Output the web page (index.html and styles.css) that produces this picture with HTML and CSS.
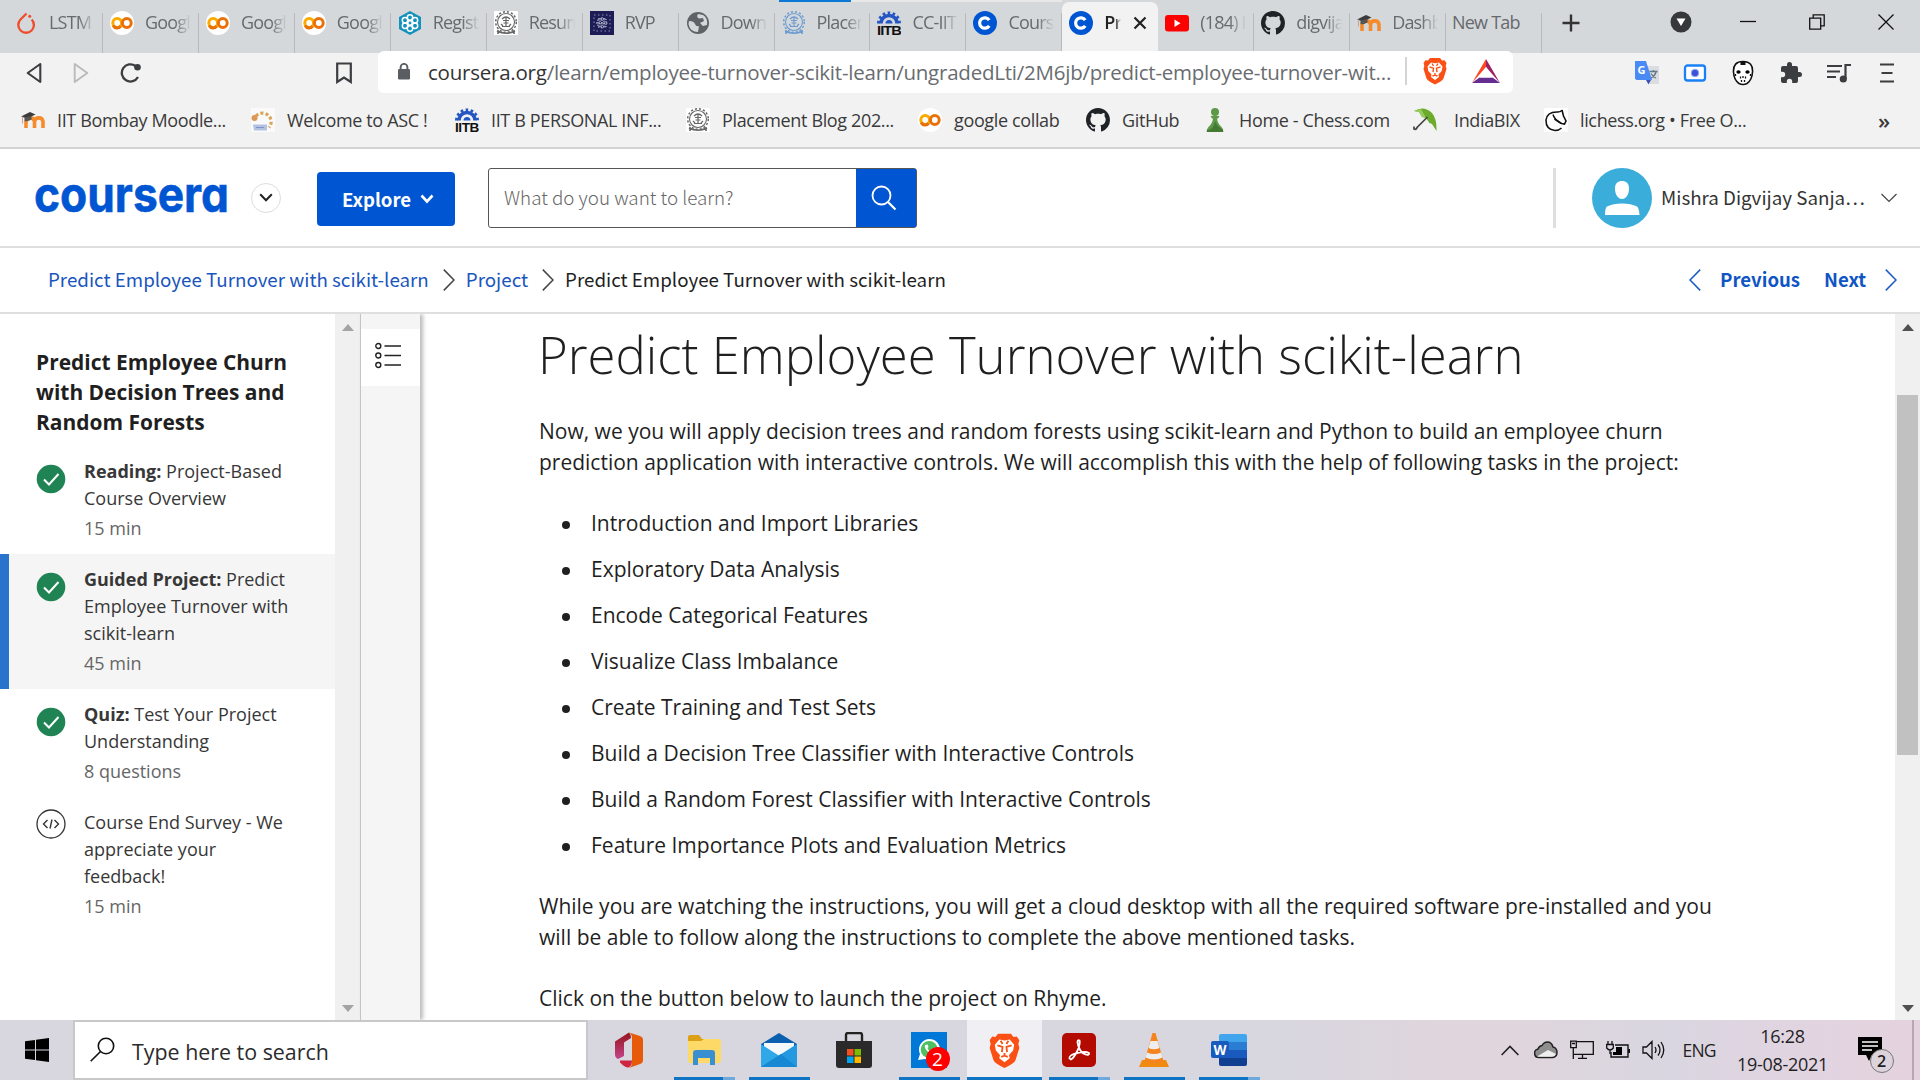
FILE: index.html
```html
<!DOCTYPE html>
<html lang="en">
<head>
<meta charset="utf-8">
<title>Predict Employee Turnover with scikit-learn | Coursera</title>
<link rel="stylesheet" href="styles.css">
</head>
<body>
<svg class="defs" width="0" height="0" aria-hidden="true">
  <symbol id="colab" viewBox="0 0 24 24"><circle cx="12" cy="12" r="12" fill="#fff"/><circle cx="7.2" cy="12" r="4.4" fill="none" stroke="#f9ab00" stroke-width="3"/><circle cx="16.8" cy="12" r="4.4" fill="none" stroke="#e8710a" stroke-width="3"/><path d="M3.2 14.5a4.4 4.4 0 0 0 7.4.8" fill="none" stroke="#e8710a" stroke-width="3"/></symbol>
  <symbol id="moodle" viewBox="0 0 24 24"><path d="M5 20V13.500a4.300 4.300 0 0 1 8.500 0V20M13.500 20v-6.500a4.300 4.300 0 0 1 8.500 0V20" fill="none" stroke="#f58b2c" stroke-width="3.600"/><path d="M0 8.500 9 4l5.500 2.500L6 10.500z" fill="#3b3b3b"/><path d="M3.500 9.500v3.500q3 1 7-1.500V8z" fill="#555"/><path d="M1.500 8.500v7" stroke="#c9a58d" stroke-width="1"/></symbol>
  <symbol id="iitb" viewBox="0 0 24 24"><path d="M4 12.500a8 8 0 0 1 16 0" fill="none" stroke="#2456c4" stroke-width="3.500"/><path d="M1.500 12.500a10.500 10.500 0 0 1 21 0" fill="none" stroke="#2456c4" stroke-width="3" stroke-dasharray="2.600 2.400"/><path d="M8.500 12.500a3.500 3.500 0 0 1 7 0" fill="#2456c4"/><text x="0" y="24" textLength="24" lengthAdjust="spacingAndGlyphs" class="iitb-text">IITB</text></symbol>
  <symbol id="seal" viewBox="0 0 24 24"><circle cx="12" cy="11" r="8.500" fill="none" stroke="currentColor" stroke-width="1.100"/><circle cx="12" cy="11" r="10.300" fill="none" stroke="currentColor" stroke-width="1.500" stroke-dasharray="2.100 2"/><path d="M8 8q4-4 8 0M9 9.500h6M9.500 12h5M12 6v10M8 15.500h8M7 13l2 2M17 13l-2 2" fill="none" stroke="currentColor" stroke-width="1.200"/><path d="M3 20q9 4.500 18 0M4 19v4M20 19v4" fill="none" stroke="currentColor" stroke-width="1.600"/></symbol>
  <symbol id="github" viewBox="0 0 16 16"><path fill="#1f2328" d="M8 0C3.580 0 0 3.580 0 8c0 3.540 2.290 6.530 5.470 7.590.4.070.55-.17.55-.38 0-.19-.01-.82-.01-1.490-2.010.37-2.530-.49-2.690-.94-.09-.23-.48-.94-.82-1.130-.28-.15-.68-.52-.01-.53.63-.01 1.080.58 1.230.82.72 1.210 1.870.87 2.330.66.07-.52.28-.87.51-1.070-1.780-.2-3.640-.89-3.640-3.950 0-.87.31-1.590.82-2.150-.08-.2-.36-1.020.08-2.120 0 0 .67-.21 2.200.82.64-.18 1.320-.27 2-.27s1.360.09 2 .27c1.530-1.040 2.200-.82 2.200-.82.44 1.100.16 1.920.08 2.120.51.56.82 1.270.82 2.150 0 3.070-1.870 3.750-3.650 3.950.29.25.54.73.54 1.480 0 1.070-.01 1.930-.01 2.200 0 .21.15.46.55.38A8.010 8.010 0 0 0 16 8c0-4.420-3.580-8-8-8z"/></symbol>
  <symbol id="course" viewBox="0 0 24 24"><circle cx="12" cy="12" r="12" fill="#0056d2"/><path d="M16.200 9.200a5.200 5.200 0 1 0 0 5.600" fill="none" stroke="#fff" stroke-width="3.200"/></symbol>
  <symbol id="brave" viewBox="0 0 24 28"><path d="M7 1h10l2 2.500 2.500-.3L23.500 6l-.8 3 .8 3-3 9.500q-1 2.500-8.500 6-7.500-3.500-8.500-6L.5 12l.8-3L.5 6l2-2.800 2.500.3z" fill="#fb5015"/><path d="M8 5.500 12 6.300l4-.8 3.500 4-.8 4.500-3.200 3.500.5 2.500L12 23l-4-3 .5-2.500L5.300 14l-.8-4.500z" fill="#fff"/><path d="M6.500 10l4 1.200-.5 4M17.500 10l-4 1.200.5 4M12 16v2.500M9.500 19l2.500-1 2.500 1M9 6.500l1.500 2.500M15 6.500 13.500 9" fill="none" stroke="#fb5015" stroke-width="1.400"/></symbol>
  <symbol id="done" viewBox="0 0 30 30"><circle cx="15" cy="15" r="14.300" fill="#1f8354"/><path d="M8 15.500 13 20.500 22.500 10" fill="none" stroke="#fff" stroke-width="2"/></symbol>
  <symbol id="right" viewBox="0 0 12 22"><path d="M.8.6 11 11 .8 21.400" fill="none" stroke="currentColor" stroke-width="1.500"/></symbol>
</svg>

<header class="tabs">
  <div class="tab"><svg viewBox="0 0 24 24"><path d="M12.500 2.500 6.500 8.500a7.800 7.800 0 1 0 11.200 0" fill="none" stroke="#ee4c2c" stroke-width="2.300"/><circle cx="15.700" cy="5.200" r="1.500" fill="#ee4c2c"/></svg><span>LSTM</span></div>
  <div class="tab"><svg><use href="#colab"/></svg><span>Googl</span></div>
  <div class="tab"><svg><use href="#colab"/></svg><span>Googl</span></div>
  <div class="tab"><svg><use href="#colab"/></svg><span>Googl</span></div>
  <div class="tab"><svg viewBox="0 0 24 24"><path d="M12 0 23 6v12l-11 6L1 18V6z" fill="#1591bd"/><g fill="none" stroke="#fff" stroke-width="1.500"><circle cx="12" cy="12" r="2.200"/><circle cx="12" cy="6.500" r="2.700"/><circle cx="12" cy="17.500" r="2.700"/><circle cx="7" cy="9.300" r="2.700"/><circle cx="17" cy="9.300" r="2.700"/><circle cx="7" cy="14.700" r="2.700"/><circle cx="17" cy="14.700" r="2.700"/></g></svg><span>Regist</span></div>
  <div class="tab"><svg class="seal-dark"><use href="#seal"/></svg><span>Resum</span></div>
  <div class="tab"><svg viewBox="0 0 24 24"><path d="M0 0h24v24H0z" fill="#1d1c55"/><path d="M4 4h16v16H4z" fill="none" stroke="#8f8ec4" stroke-dasharray="1.500 2.500"/><path d="M8 8h8v8H8zM12 6v12M6 12h12M10 7v10M14 7v10" fill="none" stroke="#dcdcf0" stroke-dasharray="1.500 1"/></svg><span>RVP</span></div>
  <div class="tab"><svg viewBox="0 0 24 24"><circle cx="12" cy="12" r="11" fill="#5f6368"/><path d="M3 10q5 0 6 3t4 2l-1 6q-8 0-9.500-8zM12 3q-2 3 1 4.500l4-.5 1 3-4 2 3 3 4-1q1-7-4-10z" fill="#d5d8db"/></svg><span>Down</span></div>
  <div class="tab"><svg class="seal-blue"><use href="#seal"/></svg><span>Placem</span></div>
  <div class="tab"><svg><use href="#iitb"/></svg><span>CC-IIT</span></div>
  <div class="tab"><svg><use href="#course"/></svg><span>Cours</span></div>
  <div class="tab tab-active"><svg><use href="#course"/></svg><span>Pre</span><svg class="tab-close" viewBox="0 0 14 14"><path d="M1.500 1.500l11 11M12.500 1.500l-11 11" stroke="#222" stroke-width="2.200"/></svg></div>
  <div class="tab"><svg viewBox="0 0 24 24"><rect y="4" width="24" height="16.500" rx="3" fill="#f00"/><path d="M9.500 8.500v7.500l6-3.700z" fill="#fff"/></svg><span>(184) I</span></div>
  <div class="tab"><svg><use href="#github"/></svg><span>digvija</span></div>
  <div class="tab"><svg><use href="#moodle"/></svg><span>Dashb</span></div>
  <div class="tab tab-new"><span>New Tab</span></div>
  <svg class="plus" viewBox="0 0 18 18"><path d="M9 .5v17M.5 9h17" stroke="#333" stroke-width="2.400"/></svg>
  <div class="window-controls">
    <svg width="22" height="22" viewBox="0 0 22 22"><circle cx="11" cy="11" r="10.500" fill="#36383b"/><path d="M6.500 7.500h9L11 15z" fill="#fff"/></svg>
    <svg width="16" height="16" viewBox="0 0 16 16"><path d="M0 7.500h16" stroke="#111" stroke-width="1.300"/></svg>
    <svg width="16" height="16" viewBox="0 0 16 16"><path d="M.7 4.200h11v11H.7zM4.200 4V.8h11v11H12" fill="none" stroke="#111" stroke-width="1.300"/></svg>
    <svg width="16" height="16" viewBox="0 0 16 16"><path d="M.5.5l15 15M15.500.5l-15 15" stroke="#111" stroke-width="1.300"/></svg>
  </div>
</header>

<div class="toolbar">
  <div class="nav-buttons">
    <svg width="16" height="22" viewBox="0 0 16 22"><path d="M14.300 2 1.700 11l12.600 9z" fill="none" stroke="#3c3d40" stroke-width="2.100" stroke-linejoin="round"/></svg>
    <svg width="16" height="22" viewBox="0 0 16 22"><path d="M1.700 2v18L14.300 11z" fill="none" stroke="#b9babb" stroke-width="1.900" stroke-linejoin="round"/></svg>
    <svg width="22" height="22" viewBox="0 0 22 22"><path d="M18 15A8.600 8.600 0 1 1 15.500 4" fill="none" stroke="#3c3d40" stroke-width="2.300"/><circle cx="17.500" cy="5.300" r="3.300" fill="#3c3d40"/></svg>
    <svg class="bookmark-toggle" width="16" height="22" viewBox="0 0 16 22"><path d="M1.200 1.500h13.600v18.500L8 15.500 1.200 20z" fill="none" stroke="#3c3d40" stroke-width="2.200"/></svg>
  </div>
  <div class="address">
    <svg width="12" height="17" viewBox="0 0 12 17"><rect y="6" width="12" height="10.500" rx="1.200" fill="#5a5d62"/><path d="M2.600 6.500V4.300a3.400 3.400 0 0 1 6.800 0v2.200" fill="none" stroke="#5a5d62" stroke-width="1.900"/></svg>
    <span class="url"><b>coursera.org</b>/learn/employee-turnover-scikit-learn/ungradedLti/2M6jb/predict-employee-turnover-wit...</span>
    <i class="address-rule"></i>
    <svg width="24" height="28"><use href="#brave"/></svg>
    <svg width="28" height="24" viewBox="0 0 28 24"><path d="M14 0 0 24l14-16z" fill="#ff4724"/><path d="M14 0 28 24 14 8z" fill="#9e1f63"/><path d="M0 24h28L20.500 18.500h-13z" fill="#662d91"/><path d="M14 8 7.500 18.500h13z" fill="#fff"/></svg>
  </div>
  <div class="extensions">
    <svg width="24" height="24" viewBox="0 0 24 24"><path d="M11 5h13v18H15z" fill="#dadce0"/><path d="M0 0h11l6 19H1.500L0 17.500z" fill="#4a8af4"/><path d="M11 19h5l-2.500 4.500z" fill="#3a51b8"/><text x="2.500" y="13" class="translate-g">G</text><path d="M14.500 10.500h8M18.500 9v2M21 11q-1 4-5 6M16 12.500q2 3.500 5 4.500" fill="none" stroke="#5f7a86" stroke-width="1.300"/></svg>
    <svg width="24" height="20" viewBox="0 0 24 20"><rect x="2" y="2.500" width="20" height="15" rx="2.500" fill="#fff" stroke="#1a80f8" stroke-width="2.300"/><circle cx="12" cy="10" r="3.800" fill="#3f51d8" stroke="#8fb3f4"/></svg>
    <svg width="24" height="26" viewBox="0 0 24 26"><path d="M12 1.500c7 0 10 4 9.500 10.500Q21 20 16 23.500q-4 2-8 0Q3 20 2.500 12 2 1.500 12 1.500z" fill="#fff" stroke="#111" stroke-width="1.600"/><path d="M12 1v4" stroke="#111" stroke-width="5"/><ellipse cx="7.500" cy="12" rx="2.200" ry="1.800"/><ellipse cx="16.500" cy="12" rx="2.200" ry="1.800"/><path d="M9.500 16.500v2M12 16v2M14.500 16.500v2M10.500 20v2M13.500 20v2M4.500 14v2M19.500 14v2" stroke="#111" stroke-width="1.300"/></svg>
    <svg width="24" height="24" viewBox="0 0 24 24"><path fill="#3c3d40" d="M20.500 11H19V7a2 2 0 0 0-2-2h-4V3.500a2.500 2.500 0 0 0-5 0V5H4a2 2 0 0 0-2 2v3.800h1.500a2.700 2.700 0 0 1 0 5.400H2V20a2 2 0 0 0 2 2h3.800v-1.500a2.700 2.700 0 0 1 5.400 0V22H17a2 2 0 0 0 2-2v-4h1.500a2.500 2.500 0 0 0 0-5z"/></svg>
    <svg width="24" height="22" viewBox="0 0 24 22"><path d="M0 4h15M0 9.500h13M0 15h9" stroke="#3c3d40" stroke-width="2.200"/><path d="M18.500 17V3H24" fill="none" stroke="#3c3d40" stroke-width="2.200"/><circle cx="16.300" cy="17" r="3.600" fill="#3c3d40"/></svg>
    <svg width="24" height="22" viewBox="0 0 24 22"><path d="M5 2.500h14M6.500 11h11M5 19.500h14" stroke="#3c3d40" stroke-width="2.200"/></svg>
  </div>
</div>

<nav class="bookmarks">
  <a><svg><use href="#moodle"/></svg>IIT Bombay Moodle...</a>
  <a><svg viewBox="0 0 24 24"><rect width="24" height="24" fill="#fafafa"/><path d="M5 8A8.500 8.500 0 1 1 18 19.500" fill="none" stroke="#d9a558" stroke-width="3.200" stroke-dasharray="3 2.200"/><circle cx="3.500" cy="10" r="3" fill="#dd9654"/><path d="M2 16.500h14v6H3z" fill="#b4c1e2"/><path d="M5 19.500h8" stroke="#7f93c8"/></svg>Welcome to ASC !</a>
  <a><svg><use href="#iitb"/></svg>IIT B PERSONAL INF...</a>
  <a><svg class="seal-dark"><use href="#seal"/></svg>Placement Blog 202...</a>
  <a><svg><use href="#colab"/></svg>google collab</a>
  <a><svg><use href="#github"/></svg>GitHub</a>
  <a><svg viewBox="0 0 24 24"><circle cx="12" cy="4" r="4" fill="#5d9948"/><path d="M7.500 8h9l-1.500 2.500h-1q.5 5 4.500 8.500 2 2 2 5h-17q0-3 2-5 4-3.500 4.500-8.500H9z" fill="#5d9948"/><path d="M12 13q1 5 8 8.500v2.500H4v-2q7 0 8-9z" fill="#457a34"/></svg>Home - Chess.com</a>
  <a class="wide-gap"><svg viewBox="0 0 24 24"><path d="M1 3Q11-3 19 5q5 6 4.500 18L19 16l-2.500-1L13 10 9 9 6 4z" fill="#6cab2c"/><path d="M1 3 6 4 9 9l4 1L8 1z" fill="#98cc5f"/><path d="M14.500 9 4.500 19q-1.500 3-3.500 2v-2.500" fill="none" stroke="#444" stroke-width="1.700"/></svg>IndiaBIX</a>
  <a><svg viewBox="0 0 24 24"><rect width="24" height="24" fill="#fff"/><path d="M18 2q-1 2-4 2Q3 3.500 2 12q-.3 9.500 9 10.500 4 0 6.500-2.500M18 2l1.500 6 2.500 5-1.500 3-3-.5-7-4.500" fill="none" stroke="#111" stroke-width="1.600"/><path d="M9 6.500q1 4.500 8 9" fill="none" stroke="#111" stroke-width="1.400"/></svg>lichess.org • Free O...</a>
  <span class="more">»</span>
</nav>

<section class="site-header">
  <svg class="logo" width="196" height="50" viewBox="0 0 196 50"><text x="-1" y="38.500" textLength="195" lengthAdjust="spacingAndGlyphs">coursera</text></svg>
  <button class="round"><svg width="14" height="9" viewBox="0 0 14 9"><path d="M1.200 1.200 7 7.200l5.800-6" fill="none" stroke="#222" stroke-width="2"/></svg></button>
  <button class="explore">Explore<svg width="14" height="10" viewBox="0 0 14 10"><path d="M1.500 1.500 7 7.500l5.500-6" fill="none" stroke="#fff" stroke-width="2.600"/></svg></button>
  <div class="search"><span>What do you want to learn?</span><b><svg width="26" height="26" viewBox="0 0 26 26"><circle cx="10.500" cy="10.500" r="9" fill="none" stroke="#fff" stroke-width="1.800"/><path d="M17 17l7.500 7.500" stroke="#fff" stroke-width="2.200"/></svg></b></div>
  <i class="header-rule"></i>
  <svg class="avatar" width="60" height="60" viewBox="0 0 60 60"><circle cx="30" cy="30" r="30" fill="#3badda"/><path d="M30 13c4 0 7 2 7 7.500 0 6-3 10.500-7 10.500s-7-4.500-7-10.500C23 15 26 13 30 13z" fill="#fff"/><path d="M13 47q0-7 2-8.500Q21 35.500 30 35.500t15 3q2 1.500 2.500 8.500z" fill="#fff"/></svg>
  <span class="user">Mishra Digvijay Sanja…</span>
  <svg width="16" height="10" viewBox="0 0 16 10"><path d="M.5 1 8 8.500 15.500 1" fill="none" stroke="#444" stroke-width="1.200"/></svg>
</section>

<nav class="crumbs">
  <a>Predict Employee Turnover with scikit-learn</a>
  <svg><use href="#right"/></svg>
  <a>Project</a>
  <svg><use href="#right"/></svg>
  <span>Predict Employee Turnover with scikit-learn</span>
  <div class="pager"><svg class="flip"><use href="#right"/></svg><b class="prev">Previous</b><b class="next">Next</b><svg><use href="#right"/></svg></div>
</nav>

<main class="course">
  <aside class="outline">
    <h2>Predict Employee Churn<br>with Decision Trees and<br>Random Forests</h2>
    <div class="item"><svg><use href="#done"/></svg><p><b>Reading:</b> Project-Based<br>Course Overview<small>15 min</small></p></div>
    <div class="item item-current"><svg><use href="#done"/></svg><p><b>Guided Project:</b> Predict<br>Employee Turnover with<br>scikit-learn<small>45 min</small></p></div>
    <div class="item"><svg><use href="#done"/></svg><p><b>Quiz:</b> Test Your Project<br>Understanding<small>8 questions</small></p></div>
    <div class="item item-survey"><svg viewBox="0 0 30 30"><circle cx="15" cy="15" r="14" fill="none" stroke="#333" stroke-width="1.300"/><path d="M11.500 11 7.500 15l4 4M18.500 11l4 4-4 4M16 10.500l-2 9" fill="none" stroke="#333" stroke-width="1.400"/></svg><p>Course End Survey - We<br>appreciate your<br>feedback!<small>15 min</small></p></div>
  </aside>
  <div class="scrollbar scrollbar-outline"><svg width="12" height="7" viewBox="0 0 12 7"><path d="M6 0l6 7H0z"/></svg><svg width="12" height="7" viewBox="0 0 12 7"><path d="M0 0h12L6 7z"/></svg></div>
  <div class="rail"><div class="rail-button"><svg width="26" height="28" viewBox="0 0 26 28"><g fill="none" stroke="#222" stroke-width="1.400"><circle cx="3.300" cy="4" r="2.500"/><circle cx="3.300" cy="13.500" r="2.500"/><circle cx="3.300" cy="23" r="2.500"/><path d="M9.500 4H26M9.500 13.500H26M9.500 23H26"/></g></svg></div></div>
  <article class="lesson">
    <h1>Predict Employee Turnover with scikit-learn</h1>
    <p>Now, we you will apply decision trees and random forests using scikit-learn and Python to build an employee churn<br>prediction application with interactive controls. We will accomplish this with the help of following tasks in the project:</p>
    <ul>
      <li>Introduction and Import Libraries</li>
      <li>Exploratory Data Analysis</li>
      <li>Encode Categorical Features</li>
      <li>Visualize Class Imbalance</li>
      <li>Create Training and Test Sets</li>
      <li>Build a Decision Tree Classifier with Interactive Controls</li>
      <li>Build a Random Forest Classifier with Interactive Controls</li>
      <li>Feature Importance Plots and Evaluation Metrics</li>
    </ul>
    <p>While you are watching the instructions, you will get a cloud desktop with all the required software pre-installed and you<br>will be able to follow along the instructions to complete the above mentioned tasks.</p>
    <p>Click on the button below to launch the project on Rhyme.</p>
  </article>
  <div class="scrollbar scrollbar-page"><svg width="12" height="7" viewBox="0 0 12 7"><path d="M6 0l6 7H0z"/></svg><i class="thumb"></i><svg width="12" height="7" viewBox="0 0 12 7"><path d="M0 0h12L6 7z"/></svg></div>
</main>

<footer class="taskbar">
  <div class="start"><svg width="24" height="24" viewBox="0 0 24 24"><path d="M0 3.300 10 2v9.500H0zM11 1.800 24 0v11.500H11zM0 12.500h10V22L0 20.700zM11 12.500h13V24l-13-1.800z"/></svg></div>
  <div class="task-search"><svg width="25" height="25" viewBox="0 0 25 25"><circle cx="16" cy="9" r="7.700" fill="none" stroke="#111" stroke-width="1.600"/><path d="M10.500 14.500.7 24.300" stroke="#111" stroke-width="1.600"/></svg><span>Type here to search</span></div>
  <div class="apps">
    <div class="app"><svg width="28" height="36" viewBox="0 0 28 36"><linearGradient id="office" x1="0" y1="0" x2="0" y2="1"><stop stop-color="#96131b"/><stop offset="1" stop-color="#c4458a"/></linearGradient><path d="M0 9.500 14 .500q2 2 2 5.500L9 10.500V24l-6 3q-3-1.500-3-4.500z" fill="url(#office)"/><path d="M14 .500 25 4q3 1 3 4v20q0 3-3 4l-11 4q3-2 3-5V6q0-4-3-5.500z" fill="#e65a0a"/><path d="M5 28.500h12q0 6-4 7-3 0-8-5z" fill="#cf2540"/></svg></div>
    <div class="app app-open app-stack"><svg width="34" height="30" viewBox="0 0 34 30"><path d="M1 2q0-2 2-2h9l3 4h15v6H1z" fill="#dd9f14"/><path d="M1 6h13l3-2h15q2 0 2 2v20q0 2-2 2H3q-2 0-2-2z" fill="#fdd968"/><path d="M6 30V18q0-3 3-3h16q3 0 3 3v12h-5v-7H11v7z" fill="#3a8fd0"/></svg></div>
    <div class="app app-open"><svg width="36" height="34" viewBox="0 0 36 34"><path d="M0 11 18 0l18 11v4H0z" fill="#0a5fae"/><path d="M3 10h30v16H3z" fill="#f5f8fb"/><path d="M0 11l20 13L0 34z" fill="#2fa8e8"/><path d="M36 11v23H0z" fill="#2499df"/><path d="M0 34 20 21l16 13z" fill="#1788d4"/></svg></div>
    <div class="app"><svg width="36" height="36" viewBox="0 0 36 36"><path d="M10 12V3q0-2 2-2h12q2 0 2 2v9" fill="none" stroke="#222" stroke-width="2.400"/><path d="M0 9h36v24q0 3-3 3H3q-3 0-3-3z" fill="#2a2a2b"/><path d="M11 17h6.500v6.500H11z" fill="#f25022"/><path d="M18.500 17H25v6.500h-6.500z" fill="#7fba00"/><path d="M11 24.500h6.500V31H11z" fill="#00a4ef"/><path d="M18.500 24.500H25V31h-6.500z" fill="#ffb900"/></svg></div>
    <div class="app app-open"><svg width="36" height="36" viewBox="0 0 36 36"><path d="M0 0h36v36H0z" fill="#0078d7"/><path d="M7 28l2-6A10.500 10.500 0 1 1 14 27z" fill="#fff"/><circle cx="18.200" cy="17.500" r="8.500" fill="#4ebf63"/><path d="M14 13q-1 3 3 7t7 2l-1-3-2-.5-1.500 1q-2.500-1-3-3.500l1-1-1-2.500z" fill="#fff"/></svg><em>2</em></div>
    <div class="app app-open app-active"><svg width="31" height="37"><use href="#brave"/></svg></div>
    <div class="app app-open app-stack"><svg width="34" height="34" viewBox="0 0 34 34"><rect width="34" height="34" rx="5" fill="#b30b00"/><path d="M7.500 25.500q-1-3.500 8-5.500 8-2 11.500 0 .5 2.500-3.500 1.500Q17 19 15.500 9.500q0-3 2-2 1 2-1.500 9Q12 25 9 26.500z" fill="none" stroke="#fff" stroke-width="1.800"/></svg></div>
    <div class="app app-open"><svg width="30" height="34" viewBox="0 0 30 34"><path d="M3 27h24l3 7H0z" fill="#f08a10"/><path d="M13.500 0h3l8 28q-9.500 5-19 0z" fill="#f5841f"/><path d="M11.500 8h7l2 7q-5.500 2.500-11 0zM8 19.500q7 3 14 0l1.600 5q-8.600 4-17.200 0z" fill="#eee"/></svg></div>
    <div class="app app-open app-stack"><svg width="36" height="32" viewBox="0 0 36 32"><path d="M8 2q0-2 2-2h24q2 0 2 2v7H8z" fill="#41a5ee"/><path d="M8 8h28v8H8z" fill="#2b7cd3"/><path d="M8 16h28v8H8z" fill="#185abd"/><path d="M8 24h28v6q0 2-2 2H10q-2 0-2-2z" fill="#103f91"/><rect y="7" width="18" height="17" rx="2" fill="#185abd"/><text x="2.500" y="20.500" textLength="13" lengthAdjust="spacingAndGlyphs" class="word-w">W</text></svg></div>
  </div>
  <div class="tray">
    <svg width="18" height="11" viewBox="0 0 18 11"><path d="M.6 10 9 1.500l8.400 8.500" fill="none" stroke="#222" stroke-width="1.600"/></svg>
    <svg width="24" height="18" viewBox="0 0 24 18"><path d="M5 16.500A4.300 4.300 0 0 1 4 8Q5 5 8 4.500 10 1 13.500 1 17.500 1 19 6q4 1 4 5.500 0 4-4 5z" fill="#8e8e8e" stroke="#222" stroke-width="1.500"/><path d="M3 15.500 14 9l8 4q-1 2.700-4 2.700H5z" fill="#eee"/></svg>
    <svg width="24" height="20" viewBox="0 0 24 20"><path d="M7 1.700h16.300v12.600H4M3.300 8v11M8 18.300h9M12.500 14.500v4M.7 1.200h5.600v6.500H.7zM2 3.500h3" fill="none" stroke="#111" stroke-width="1.300"/></svg>
    <svg width="24" height="18" viewBox="0 0 24 18"><path d="M9 4h13v12H5V11M23.300 8v4" fill="none" stroke="#111" stroke-width="1.400"/><path d="M10 6h6v8H7v-3h3z"/><path d="M2 0v3M6 0v3M.7 3.500h6.600V7Q4 11 .7 7zM4 9v4" fill="none" stroke="#111" stroke-width="1.300"/></svg>
    <svg width="24" height="20" viewBox="0 0 24 20"><path d="M1 7h3.500L10 1.500v17L4.500 13H1zM13 7q2 3 0 6M16 4.500q4 5.500 0 11M19 2q5.500 8 0 16" fill="none" stroke="#111" stroke-width="1.300"/></svg>
    <span class="lang">ENG</span>
    <span class="clock"><span>16:28</span><span>19-08-2021</span></span>
    <span class="notice"><svg width="24" height="26" viewBox="0 0 24 26"><path d="M0 0h24v18H14l-3 6-3-6H0z"/><path d="M4 5h16M4 9h16M4 13h10" stroke="#fff" stroke-width="1.300"/></svg><em>2</em></span>
  </div>
</footer>
</body>
</html>
```
FILE: styles.css
```css
* { box-sizing: border-box; }
body { margin: 0; width: 1920px; height: 1080px; overflow: hidden; display: flex; flex-direction: column; background: #fff; color: #1f1f1f; font-family: "Open Sans", "Noto Sans", sans-serif; }
svg { display: block; flex: none; }
.defs { position: absolute; }
button { border: 0; padding: 0; }
h1, h2, p, ul { margin: 0; }

.iitb-text { font: 900 12.500px "Liberation Sans", sans-serif; fill: #111; }
.translate-g { font: bold 11px "Open Sans", sans-serif; fill: #fff; }
.word-w { font: bold 15px "Open Sans", sans-serif; fill: #fff; }
.seal-dark { color: #666; background: #fff; }
.seal-blue { color: #6c9bd0; }

.tabs { height: 53px; flex: none; display: flex; align-items: center; padding-left: 7px; background: linear-gradient(90deg, transparent 779px, #0a78d4 779px, #0a78d4 851px, #e8e8e8 851px, #e8e8e8 1062px, transparent 1062px) 0 0 / 100% 2px no-repeat, #d5d8db; }
.tab { width: 95.950px; height: 53px; flex: none; display: flex; align-items: center; gap: 11px; padding: 0 5px 7px 7px; background: linear-gradient(#b7b9bb, #b7b9bb) right 13px / 1px 40px no-repeat; font-size: 18px; color: #666a6e; letter-spacing: -.8px; }
.tab svg { width: 24px; height: 24px; }
.tab span { flex: 1; min-width: 0; margin-top: -2px; overflow: hidden; white-space: nowrap; -webkit-mask-image: linear-gradient(90deg, #000 60%, transparent 95%); }
.tab-active { height: 51px; align-self: flex-end; padding-bottom: 9px; padding-right: 11px; background: #f2f2f2; border-radius: 7px 7px 0 0; color: #222; font-weight: 600; }
.tab .tab-close { width: 14px; height: 14px; }
.tab-new { padding-left: 6px; }
.tab-new span { -webkit-mask-image: none; }
.tabs .plus { width: 18px; height: 18px; margin: 0 0 7px 20px; }
.window-controls { display: flex; align-items: center; margin-left: auto; padding: 0 26px 9px 0; }
.window-controls svg + svg { margin-left: 53px; }
.window-controls svg:nth-child(2) { margin-left: 48px; }

.toolbar { height: 42px; flex: none; display: flex; background: #f2f2f2; align-items: center; padding: 0 21px 0 26px; }
.nav-buttons { display: flex; width: 352px; gap: 31px; margin-bottom: 3px; }
.bookmark-toggle { margin-left: 163px; }
.address { width: 1135px; height: 42px; border-radius: 6px; background: #fff; display: flex; align-items: center; padding: 0 13px 2px 20px; margin-top: -4px; }
.url { flex: 1; margin-left: 18px; margin-top: 1px; font-size: 20.500px; color: #696c70; white-space: nowrap; letter-spacing: -.23px; }
.url b { font-weight: 400; color: #333; }
.address-rule { width: 2px; height: 28px; margin: 0 16px 0 0; background: #d4d4d4; }
.address svg + svg { margin-left: 25px; }
.extensions { display: flex; margin-left: auto; gap: 24px; align-items: center; margin-bottom: 3px; }

.bookmarks { height: 54px; flex: none; display: grid; grid-template-columns: 230px 204px 231px 232px 168px 117px 210px 131px 334px auto; align-items: center; padding: 0 0 3px 21px; background: #f2f2f2; border-bottom: 2px solid #d2d3d5; font-size: 18px; color: #3a3a3a; white-space: nowrap; letter-spacing: -.36px; }
.bookmarks a { display: flex; align-items: center; gap: 12px; }
.bookmarks .wide-gap { gap: 17px; }
.bookmarks svg { width: 24px; height: 24px; }
.more { font-size: 22px; font-weight: 600; line-height: 22px; }

.site-header { height: 97px; flex: none; display: flex; align-items: center; padding-left: 35px; font-family: "Noto Sans CJK JP", sans-serif; }
.logo text { font: 700 49px Inter, sans-serif; font-feature-settings: "cv11"; fill: #0056d2; stroke: #0056d2; stroke-width: .6px; }
.round { width: 30px; height: 30px; border-radius: 50%; background: #fff; border: 1px solid #ddd; display: grid; place-items: center; margin-left: 20px; }
.explore { margin: 2px 0 0 36px; width: 138px; height: 54px; border-radius: 4px; background: #0056d2; color: #fff; font: 700 18.600px "Noto Sans CJK JP", sans-serif; display: flex; align-items: center; justify-content: center; gap: 9px; padding-left: 4px; }
.search { width: 429px; height: 60px; margin-left: 33px; border: 1px solid #555; border-radius: 3px; display: flex; align-items: center; justify-content: space-between; padding-left: 15px; font-size: 18.800px; font-weight: 300; color: #666; }
.search span { margin-top: -2px; }
.search b { width: 60px; height: 58px; padding-right: 5px; background: #0056d2; display: grid; place-items: center; }
.header-rule { width: 3px; height: 60px; margin-left: 636px; background: #dedede; }
.avatar { margin-left: 36px; }
.user { width: 220px; margin: -2px 0 0 9px; font-size: 18.750px; white-space: nowrap; color: #333; }

.crumbs { height: 68px; flex: none; display: flex; align-items: center; padding: 0 23px 1px 48px; border-top: 2px solid #dfdfdf; border-bottom: 2px solid #dfdfdf; font: 400 18.750px/26px "Noto Sans CJK JP", sans-serif; white-space: nowrap; }
.crumbs a, .crumbs span, .crumbs b { margin-top: -1px; }
.crumbs a { color: #1a56bd; }
.crumbs svg { width: 12px; height: 22px; margin: 0 11px 0 14px; color: #444; }
.crumbs .pager { margin-left: auto; display: flex; align-items: center; color: #0f55c4; font-size: 18.600px; }
.pager svg, .pager .flip { margin: 0; color: #1a5bc4; }
.pager .flip { transform: scaleX(-1); }
.crumbs .prev { width: 80px; margin-left: 19px; }
.crumbs .next { width: 42px; margin: -1px 19px 0 24px; }

.course { flex: 1; min-height: 0; display: flex; overflow: hidden; }
.outline { width: 335px; flex: none; padding-top: 33px; }
.outline h2 { padding-left: 36px; height: 99px; font-size: 20.950px; line-height: 30px; font-weight: 700; white-space: nowrap; }
.item { display: flex; align-items: flex-start; padding: 12px 0 12px 36px; font-size: 18px; line-height: 27px; color: #373737; }
.item svg { width: 30px; height: 30px; margin-top: 6px; }
.item p { margin-left: 18px; white-space: nowrap; }
.item small { display: block; margin-top: 3px; font-size: 18px; color: #666; }
.item-current { background: linear-gradient(90deg, #2a73cc 9px, #f5f5f5 9px); }
.item-survey svg { margin-top: 0; }
.scrollbar { display: flex; flex: none; flex-direction: column; align-items: center; justify-content: space-between; width: 25px; padding: 10px 0 8px; background: #f0f0f0; }
.scrollbar-outline { fill: #a3a3a3; }
.scrollbar-page { fill: #505050; }
.thumb { width: 21px; height: 360px; margin: 64px 0 auto; background: #c1c1c1; }
.rail { width: 60px; flex: none; padding-top: 15px; border-left: 1px solid #c4c4c4; background: #f5f5f5; box-shadow: 3px 0 4px #bbb; }
.rail-button { height: 57px; padding: 0 6px 4px 0; background: #fff; display: grid; place-items: center; }
.lesson { flex: 1; padding: 3px 0 0 119px; font-size: 21px; line-height: 31px; white-space: nowrap; }
.lesson h1 { height: 99px; margin-left: -1px; font-size: 50.900px; font-weight: 300; line-height: 76px; }
.lesson ul { padding-left: 23px; margin: 30px 0; list-style: none; }
.lesson li { display: flex; align-items: center; }
.lesson li::before { content: ""; width: 8px; height: 8px; margin: 3px 21px 0 0; border-radius: 50%; background: #1f1f1f; }
.lesson li + li { margin-top: 15px; }
.lesson p + p { margin-top: 30px; }

.taskbar { height: 60px; flex: none; display: flex; background: linear-gradient(90deg, #d8d6df 0, #d8d6df 1280px, #e1d5dc 1480px, #d9d6e0 1660px, #e1d4e1 1800px, #e4d3de 1910px); }
.start { width: 73px; display: grid; place-items: center; }
.task-search { width: 515px; display: flex; align-items: center; gap: 17px; padding: 0 0 1px 15px; border: 2px solid #c8c8cb; background: #fff; font-size: 21.400px; color: #2b2b2b; }
.task-search span { margin-top: 4px; }
.apps { display: flex; margin-left: 3.500px; }
.app { width: 75px; position: relative; display: grid; place-items: center; }
.app-open::after { content: ""; position: absolute; left: 7px; right: 7px; bottom: 0; height: 3px; background: #0f74c4; }
.app-stack::after { background: linear-gradient(90deg, #0f74c4 49px, #6da9dc 49px); }
.app-active { background: #efeff4; }
.app-active::after { left: 0; right: 0; }
.app em { position: absolute; left: 34px; top: 27px; width: 24px; height: 24px; border-radius: 50%; background: #f00; color: #fff; font: 400 19px/24px "Open Sans", sans-serif; text-align: center; }
.tray { flex: 1; display: flex; align-items: center; margin: 0 6px 0 234px; border-right: 2px solid #b6a8b5; gap: 12px; font-size: 18px; }
.tray svg:first-child { margin-right: 3px; }
.lang { width: 34px; margin-left: 5px; font-size: 17.500px; letter-spacing: -.8px; }
.clock { display: flex; flex-direction: column; align-items: center; gap: 2px; margin-left: 8px; line-height: 26px; width: 92px; white-space: nowrap; letter-spacing: -.3px; }
.notice { position: relative; margin-left: 17px; }
.notice em { position: absolute; left: 12px; top: 12px; width: 24px; height: 24px; border: 1px solid #777; border-radius: 50%; background: #dcd3dc; font: 600 16px/22px "Open Sans", sans-serif; text-align: center; }
```
